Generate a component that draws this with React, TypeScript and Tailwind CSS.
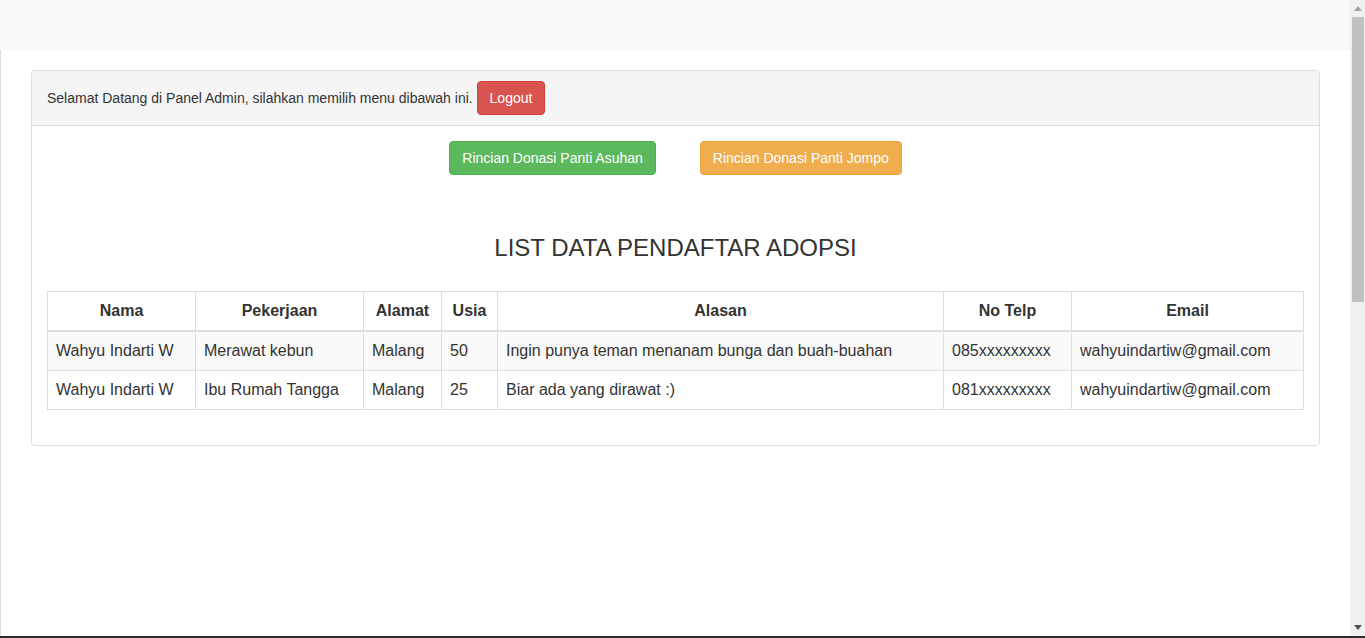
import React from "react";

type Pendaftar = {
  nama: string;
  pekerjaan: string;
  alamat: string;
  usia: string;
  alasan: string;
  telp: string;
  email: string;
};

const rows: Pendaftar[] = [
  {
    nama: "Wahyu Indarti W",
    pekerjaan: "Merawat kebun",
    alamat: "Malang",
    usia: "50",
    alasan: "Ingin punya teman menanam bunga dan buah-buahan",
    telp: "085xxxxxxxxx",
    email: "wahyuindartiw@gmail.com",
  },
  {
    nama: "Wahyu Indarti W",
    pekerjaan: "Ibu Rumah Tangga",
    alamat: "Malang",
    usia: "25",
    alasan: "Biar ada yang dirawat :)",
    telp: "081xxxxxxxxx",
    email: "wahyuindartiw@gmail.com",
  },
];

const headers = ["Nama", "Pekerjaan", "Alamat", "Usia", "Alasan", "No Telp", "Email"];
const widths = ["w-[148px]", "w-[168px]", "w-[78px]", "w-[56px]", "w-[446px]", "w-[128px]", "w-[232px]"];

const Scrollbar: React.FC = () => (
  <div className="flex w-[16px] flex-col bg-[#f0f0f0]">
    <div className="flex h-[17px] items-center justify-center">
      <svg width="8" height="5" viewBox="0 0 8 5">
        <path d="M4 0L8 5H0z" fill="#a3a3a3" />
      </svg>
    </div>
    <div className="ml-[2px] mr-[1px] h-[285px] bg-[#c1c1c1]" />
    <div className="flex-1" />
    <div className="flex h-[17px] items-center justify-center">
      <svg width="8" height="5" viewBox="0 0 8 5">
        <path d="M0 0H8L4 5z" fill="#505050" />
      </svg>
    </div>
  </div>
);

export default function App() {
  return (
    <div className="flex h-[638px] flex-col overflow-hidden font-['Liberation_Sans',Arial,sans-serif] text-[#333]">
      <div className="flex min-h-0 flex-1">
        <div className="flex flex-1 flex-col">
          <div className="h-[50px] bg-[#f8f8f8]" />
          <div className="flex-1 border-l border-[#dedede] bg-white px-[30px] pt-5">
            <div className="rounded border border-[#ddd]">
              <div className="rounded-t border-b border-[#ddd] bg-[#f5f5f5] px-[15px] py-[10px] text-[14px] leading-[20px]">
                Selamat Datang di Panel Admin, silahkan memilih menu dibawah ini.{" "}
                <button className="rounded border border-[#d43f3a] bg-[#d9534f] px-3 py-[6px] text-[14px] leading-[20px] text-white">
                  Logout
                </button>
              </div>
              <div className="p-[15px]">
                <div className="flex justify-center gap-[44px]">
                  <button className="rounded border border-[#4cae4c] bg-[#5cb85c] px-3 py-[6px] text-[14px] leading-[20px] text-white">
                    Rincian Donasi Panti Asuhan
                  </button>
                  <button className="rounded border border-[#eea236] bg-[#f0ad4e] px-3 py-[6px] text-[14px] leading-[20px] text-white">
                    Rincian Donasi Panti Jompo
                  </button>
                </div>
                <h3 className="mt-[60px] mb-[30px] text-center text-[24px] leading-[26px]">
                  LIST DATA PENDAFTAR ADOPSI
                </h3>
                <table className="mb-5 w-full table-fixed border-collapse border border-[#ddd] text-[16px] leading-[22px]">
                  <thead>
                    <tr>
                      {headers.map((h, i) => (
                        <th
                          key={h}
                          className={`${widths[i]} border border-b-2 border-[#ddd] px-2 py-2 text-center font-bold`}
                        >
                          {h}
                        </th>
                      ))}
                    </tr>
                  </thead>
                  <tbody>
                    {rows.map((r, i) => (
                      <tr key={i} className={i % 2 === 0 ? "bg-[#f9f9f9]" : "bg-white"}>
                        <td className="border border-[#ddd] px-2 py-2">{r.nama}</td>
                        <td className="border border-[#ddd] px-2 py-2">{r.pekerjaan}</td>
                        <td className="border border-[#ddd] px-2 py-2">{r.alamat}</td>
                        <td className="border border-[#ddd] px-2 py-2">{r.usia}</td>
                        <td className="border border-[#ddd] px-2 py-2">{r.alasan}</td>
                        <td className="border border-[#ddd] px-2 py-2">{r.telp}</td>
                        <td className="border border-[#ddd] px-2 py-2">{r.email}</td>
                      </tr>
                    ))}
                  </tbody>
                </table>
              </div>
            </div>
          </div>
        </div>
        <Scrollbar />
      </div>
      <div className="h-[2px] bg-[#2e2a28]" />
    </div>
  );
}
